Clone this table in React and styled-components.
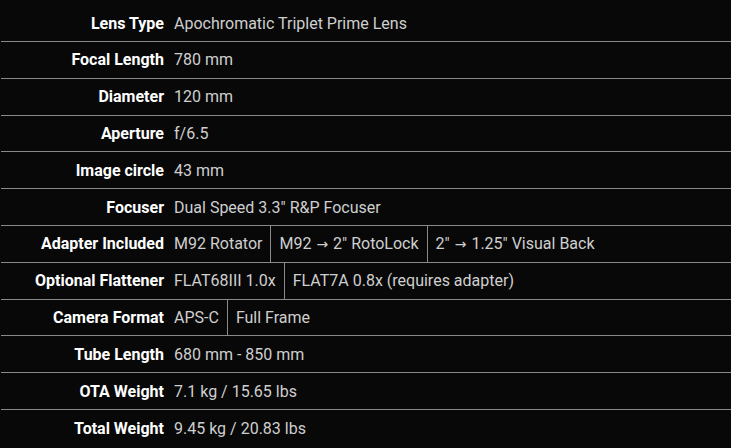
import React from 'react';
import styled, { createGlobalStyle } from 'styled-components';

const GlobalStyle = createGlobalStyle`
  html, body {
    margin: 0;
    padding: 0;
    background: #080808;
  }
  body {
    font-family: Roboto, "Liberation Sans", sans-serif;
  }
`;

const Table = styled.div`
  padding: 5.2px 0 0 1px;
  display: flex;
  flex-direction: column;
`;

const Row = styled.div`
  display: flex;
  height: 36.8px;
  border-bottom: ${(p) => (p.last ? 'none' : '1px solid #8a8a8a')};
  box-sizing: border-box;
`;

const Label = styled.div`
  width: 168px;
  flex: none;
  display: flex;
  align-items: center;
  justify-content: flex-end;
  padding-right: 5px;
  box-sizing: border-box;
  color: #fff;
  font-weight: 700;
  font-size: 16px;
  white-space: nowrap;
`;

const Value = styled.div`
  display: flex;
  align-items: center;
  padding: 0 8px 0 ${(p) => (p.first ? '5px' : '8px')};
  border-left: ${(p) => (p.first ? 'none' : '1px solid #8a8a8a')};
  color: #cfcfcf;
  font-size: 16px;
  white-space: pre;
  ${(p) => p.fill && 'flex: 1;'}
`;

const Arrow = styled.span`
  font-family: "DejaVu Sans", sans-serif;
  font-size: 14px;
  margin: 0 1px;
`;

const renderValue = (v) =>
  v.split('→').flatMap((part, i) =>
    i === 0 ? [part] : [<Arrow key={i}>→</Arrow>, part]
  );

const specs = [
  ['Lens Type', ['Apochromatic Triplet Prime Lens']],
  ['Focal Length', ['780 mm']],
  ['Diameter', ['120 mm']],
  ['Aperture', ['f/6.5']],
  ['Image circle', ['43 mm']],
  ['Focuser', ['Dual Speed 3.3" R&P Focuser']],
  ['Adapter Included', ['M92 Rotator', 'M92 → 2" RotoLock', '2" → 1.25" Visual Back']],
  ['Optional Flattener', ['FLAT68III 1.0x', 'FLAT7A 0.8x (requires adapter)']],
  ['Camera Format', ['APS-C', 'Full Frame']],
  ['Tube Length', ['680 mm - 850 mm']],
  ['OTA Weight', ['7.1 kg / 15.65 lbs']],
  ['Total Weight', ['9.45 kg / 20.83 lbs']],
];

export default function App() {
  return (
    <>
      <GlobalStyle />
      <Table>
        {specs.map(([label, values], i) => (
          <Row key={label} last={i === specs.length - 1}>
            <Label>{label}</Label>
            {values.map((v, j) => (
              <Value key={v} first={j === 0} fill={j === values.length - 1}>
                {renderValue(v)}
              </Value>
            ))}
          </Row>
        ))}
      </Table>
    </>
  );
}
